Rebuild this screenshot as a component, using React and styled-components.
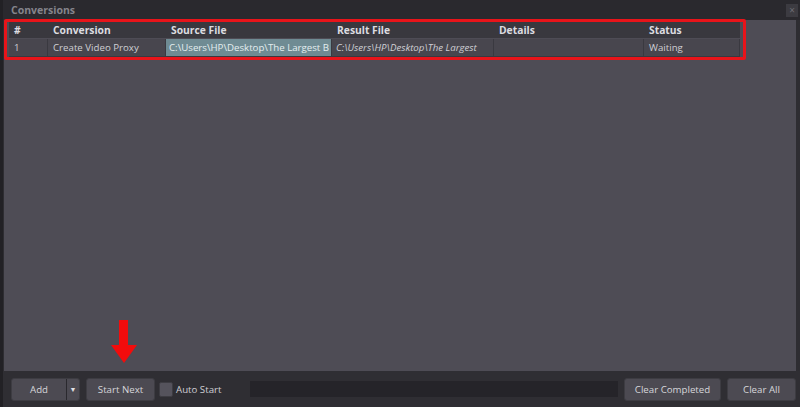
import React from 'react';
import styled, { createGlobalStyle } from 'styled-components';

const Global = createGlobalStyle`
  html, body { margin: 0; padding: 0; background: #2c2b30; }
  body { font-family: "Open Sans", "Noto Sans", sans-serif; }
`;

const Window = styled.div`
  width: 800px;
  height: 407px;
  display: flex;
  flex-direction: column;
  background: #2e2d32;
  border-left: 3px solid #222125;
  box-sizing: border-box;
  overflow: hidden;
`;

const TitleBar = styled.div`
  height: 20px;
  display: flex;
  align-items: center;
  justify-content: space-between;
  padding: 0 2px 0 8px;
  background: #2a292e;
  flex-shrink: 0;
`;

const Title = styled.span`
  color: #85848c;
  font-size: 10.5px;
  font-weight: 700;
`;

const CloseBtn = styled.div`
  width: 12px;
  height: 13px;
  background: #3c3b41;
  color: #6d6c73;
  font-size: 10px;
  line-height: 12px;
  text-align: center;
`;

const Body = styled.div`
  flex: 1;
  margin: 0 4px 0 1px;
  background: #4e4c55;
  position: relative;
  padding: 2px 0 0 5px;
`;

const Table = styled.div`
  display: grid;
  grid-template-columns: 39px 118px 166px 162px 150px 96px;
  width: 731px;
`;

const Head = styled.div`
  height: 16px;
  background: #39383e;
  color: #dcdce0;
  font-size: 10.3px;
  font-weight: 700;
  padding-left: 5px;
  line-height: 16px;
`;

const Cell = styled.div`
  height: 17px;
  margin-top: 1px;
  background: ${(p) => (p.selected ? '#6f8b93' : '#48464e')};
  color: ${(p) => (p.selected ? '#e4eef0' : '#cfcfd4')};
  font-style: ${(p) => (p.italic ? 'italic' : 'normal')};
  font-size: 9.7px;
  line-height: 17px;
  padding-left: ${(p) => p.pad || 5}px;
  border-right: 1px solid #3a3940;
  border-bottom: 1px solid #3a3940;
  white-space: nowrap;
  overflow: hidden;
`;

const Highlight = styled.div`
  position: absolute;
  left: 0;
  top: -1px;
  width: 742px;
  height: 41px;
  border: 3px solid #e8141a;
  border-radius: 2px;
  box-sizing: border-box;
  pointer-events: none;
`;

const Arrow = styled.svg`
  position: absolute;
  left: 103px;
  top: 300px;
`;

const Toolbar = styled.div`
  height: 36px;
  display: flex;
  align-items: center;
  padding: 0 0 0 8px;
  gap: 6px;
  flex-shrink: 0;
  background: #2f2e33;
`;

const Button = styled.div`
  height: 23px;
  width: ${(p) => p.w}px;
  display: flex;
  align-items: center;
  justify-content: center;
  background: #4c4a52;
  border: 1px solid #3d3c42;
  border-radius: 3px;
  color: #d6d6da;
  font-size: 9.7px;
  box-sizing: border-box;
  flex-shrink: 0;
`;

const SplitButton = styled(Button)`
  justify-content: flex-start;
  padding: 0;
`;

const SplitLabel = styled.span`
  flex: 1;
  text-align: center;
`;

const SplitArrow = styled.span`
  width: 12px;
  height: 100%;
  border-left: 1px solid #2a292e;
  display: flex;
  align-items: center;
  justify-content: center;
  font-size: 7px;
  color: #e0e0e4;
`;

const Check = styled.label`
  display: flex;
  align-items: center;
  gap: 3px;
  color: #cfcfd4;
  font-size: 9.7px;
  margin-left: -2px;
  width: 85px;
  flex-shrink: 0;
`;

const Box = styled.span`
  width: 12px;
  height: 13px;
  background: #55535c;
  border: 1px solid #3d3c42;
  border-radius: 2px;
`;

const Progress = styled.div`
  width: 368px;
  height: 16px;
  background: #252429;
  flex-shrink: 0;
`;

export default function App() {
  return (
    <>
      <Global />
      <Window>
        <TitleBar>
          <Title>Conversions</Title>
          <CloseBtn>×</CloseBtn>
        </TitleBar>
        <Body>
          <Table>
            <Head>#</Head>
            <Head>Conversion</Head>
            <Head>Source File</Head>
            <Head>Result File</Head>
            <Head>Details</Head>
            <Head>Status</Head>
            <Cell>1</Cell>
            <Cell>Create Video Proxy</Cell>
            <Cell selected pad={3}>C:\Users\HP\Desktop\The Largest B</Cell>
            <Cell italic pad={4}>C:\Users\HP\Desktop\The Largest</Cell>
            <Cell />
            <Cell>Waiting</Cell>
          </Table>
          <Highlight />
          <Arrow width="34" height="44" viewBox="0 0 34 44">
            <rect x="12" y="0" width="9" height="26" fill="#f20c0c" />
            <polygon points="4,25 30,25 17,43" fill="#f20c0c" />
          </Arrow>
        </Body>
        <Toolbar>
          <SplitButton w={69}>
            <SplitLabel>Add</SplitLabel>
            <SplitArrow>▼</SplitArrow>
          </SplitButton>
          <Button w={69}>Start Next</Button>
          <Check>
            <Box />
            Auto Start
          </Check>
          <Progress />
          <Button w={97}>Clear Completed</Button>
          <Button w={69}>Clear All</Button>
        </Toolbar>
      </Window>
    </>
  );
}
